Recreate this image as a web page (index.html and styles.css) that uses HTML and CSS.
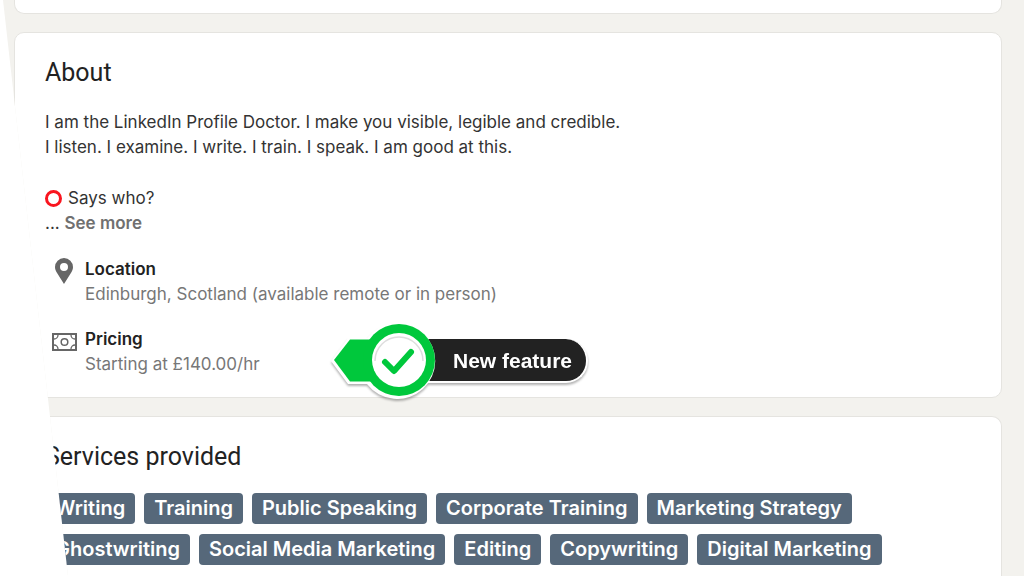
FILE: index.html
```
<!DOCTYPE html>
<html lang="en">
<head>
  <meta charset="UTF-8" />
  <meta name="viewport" content="width=device-width, initial-scale=1.0" />
  <title>About</title>
  <link rel="stylesheet" href="styles.css">
</head>
<body>
  <main>
    <div class="card card-top"></div>

    <section class="card about">
      <h2>About</h2>
      <p>I am the LinkedIn Profile Doctor. I make you visible, legible and credible.<br>
      I listen. I examine. I write. I train. I speak. I am good at this.</p>
      <p class="says"><span class="ring"></span>Says who?</p>
      <p>... <a class="more" href="#more">See more</a></p>

      <ul class="details">
        <li>
          <svg class="icon" viewBox="0 0 26 28">
            <path fill="#666" fill-rule="evenodd" d="M13 1a9 9 0 0 0-9 9c0 2 .7 3.700 1.600 5.300L13 27l7.400-11.700C21.300 13.700 22 12 22 10a9 9 0 0 0-9-9zm0 5a4 4 0 1 1 0 8 4 4 0 0 1 0-8z"/>
          </svg>
          <div>
            <h3>Location</h3>
            <div class="desc">Edinburgh, Scotland (available remote or in person)</div>
          </div>
        </li>
        <li>
          <svg class="icon" viewBox="0 0 26 28" fill="none" stroke="#666">
            <rect x="2" y="7" width="23" height="16" stroke-width="2"/>
            <circle cx="13.500" cy="15" r="3.300" stroke-width="1.500"/>
            <path stroke-width="1.300" d="M3 12a4 4 0 0 0 4-4M24 12a4 4 0 0 1-4-4M3 18a4 4 0 0 1 4 4M24 18a4 4 0 0 0-4 4"/>
          </svg>
          <div>
            <h3>Pricing</h3>
            <div class="desc">Starting at £140.00/hr</div>
          </div>
        </li>
      </ul>

      <div class="callout">
        <svg class="marker" viewBox="0 0 110 84">
          <path fill="#fff" d="M2 42 19 19h19a38 38 0 1 1 0 46H19z"/>
          <path fill="#00c83c" d="M5 41 21 20.500h21v42H21z"/>
          <circle cx="70" cy="41" r="36" fill="#00c83c"/>
          <circle cx="70" cy="41" r="27" fill="#fff"/>
          <path fill="none" stroke="#ddd" stroke-width="1.500" d="M46 42a24 24 0 0 1 48 0"/>
          <path fill="none" stroke="#00c83c" stroke-width="6" stroke-linecap="round" stroke-linejoin="round" d="M56 43l9 9 17-19"/>
        </svg>
        <span class="callout-text">New feature</span>
      </div>
    </section>

    <section class="card services">
      <h2>Services provided</h2>
      <ul class="tags">
        <li>Writing</li>
        <li>Training</li>
        <li>Public Speaking</li>
        <li>Corporate Training</li>
        <li>Marketing Strategy</li>
      </ul>
      <ul class="tags">
        <li>Ghostwriting</li>
        <li>Social Media Marketing</li>
        <li>Editing</li>
        <li>Copywriting</li>
        <li>Digital Marketing</li>
      </ul>
    </section>
  </main>
</body>
</html>
```
FILE: styles.css
```
* { box-sizing: border-box; }
body { margin: 0; background: white; font-family: Inter, "Liberation Sans", sans-serif; font-size: 17px; line-height: 25px; color: #333; }
h2, h3, p, ul { margin: 0; padding: 0; }
ul { list-style: none; }

/* the left edge of the whole page is cut on a slant */
main { min-height: 100vh; padding: 0 22px 0 14px; display: flex; flex-direction: column; background: #f3f2ee; clip-path: polygon(3px 0, 100% 0, 100% 100%, 68px 100%); }

.card { background: white; border: 1px solid #e5e4e0; border-radius: 10px; padding: 0 30px; margin-bottom: 18px; }
.card-top { height: 14px; border-top: none; border-radius: 0 0 10px 10px; }
.about { position: relative; padding-top: 24px; padding-bottom: 20px; }
h2 { font-family: Roboto, "Liberation Sans", sans-serif; font-size: 25px; line-height: 32px; font-weight: 400; color: #222; }
.about h2 { margin-bottom: 21px; }
.says { display: flex; align-items: center; gap: 6px; margin-top: 26px; }
.ring { width: 17px; height: 17px; border: 3px solid #f9151f; border-radius: 50%; }
.more { color: #707070; font-weight: 600; text-decoration: none; }

.details { margin-top: 21px; display: grid; gap: 20px; padding-left: 6px; }
.details li { display: flex; gap: 8px; }
.icon { width: 26px; height: 28px; }
h3 { font-size: 17px; line-height: 25px; font-weight: 600; color: #222; }
.desc { color: #777; }

/* green marker with a black label, lies over the card edge */
.callout { position: absolute; left: 314px; bottom: -6px; display: flex; align-items: center; filter: drop-shadow(0 2px 1px rgba(0,0,0,0.3)); }
.marker { width: 110px; height: 84px; position: relative; z-index: 1; }
.callout-text { margin-left: -20px; padding: 1px 14px 0 34px; height: 44px; border: solid white; border-width: 0 2px 2px 0; border-radius: 0 22px 22px 0; background: #222; color: white; font: bold 21px/42px "Liberation Sans", sans-serif; }

.services { flex: 1; margin-bottom: 0; padding-top: 24px; padding-bottom: 10px; border-bottom: none; border-radius: 10px 10px 0 0; }
.services h2 { margin-bottom: 20px; }
.tags { display: flex; gap: 9px; margin-bottom: 10px; }
.tags li { padding: 0 10px; border-radius: 4px; background: #56687a; color: white; font-size: 20px; line-height: 31px; font-weight: 600; white-space: nowrap; }
.tags:last-child { margin-bottom: 0; }
```
